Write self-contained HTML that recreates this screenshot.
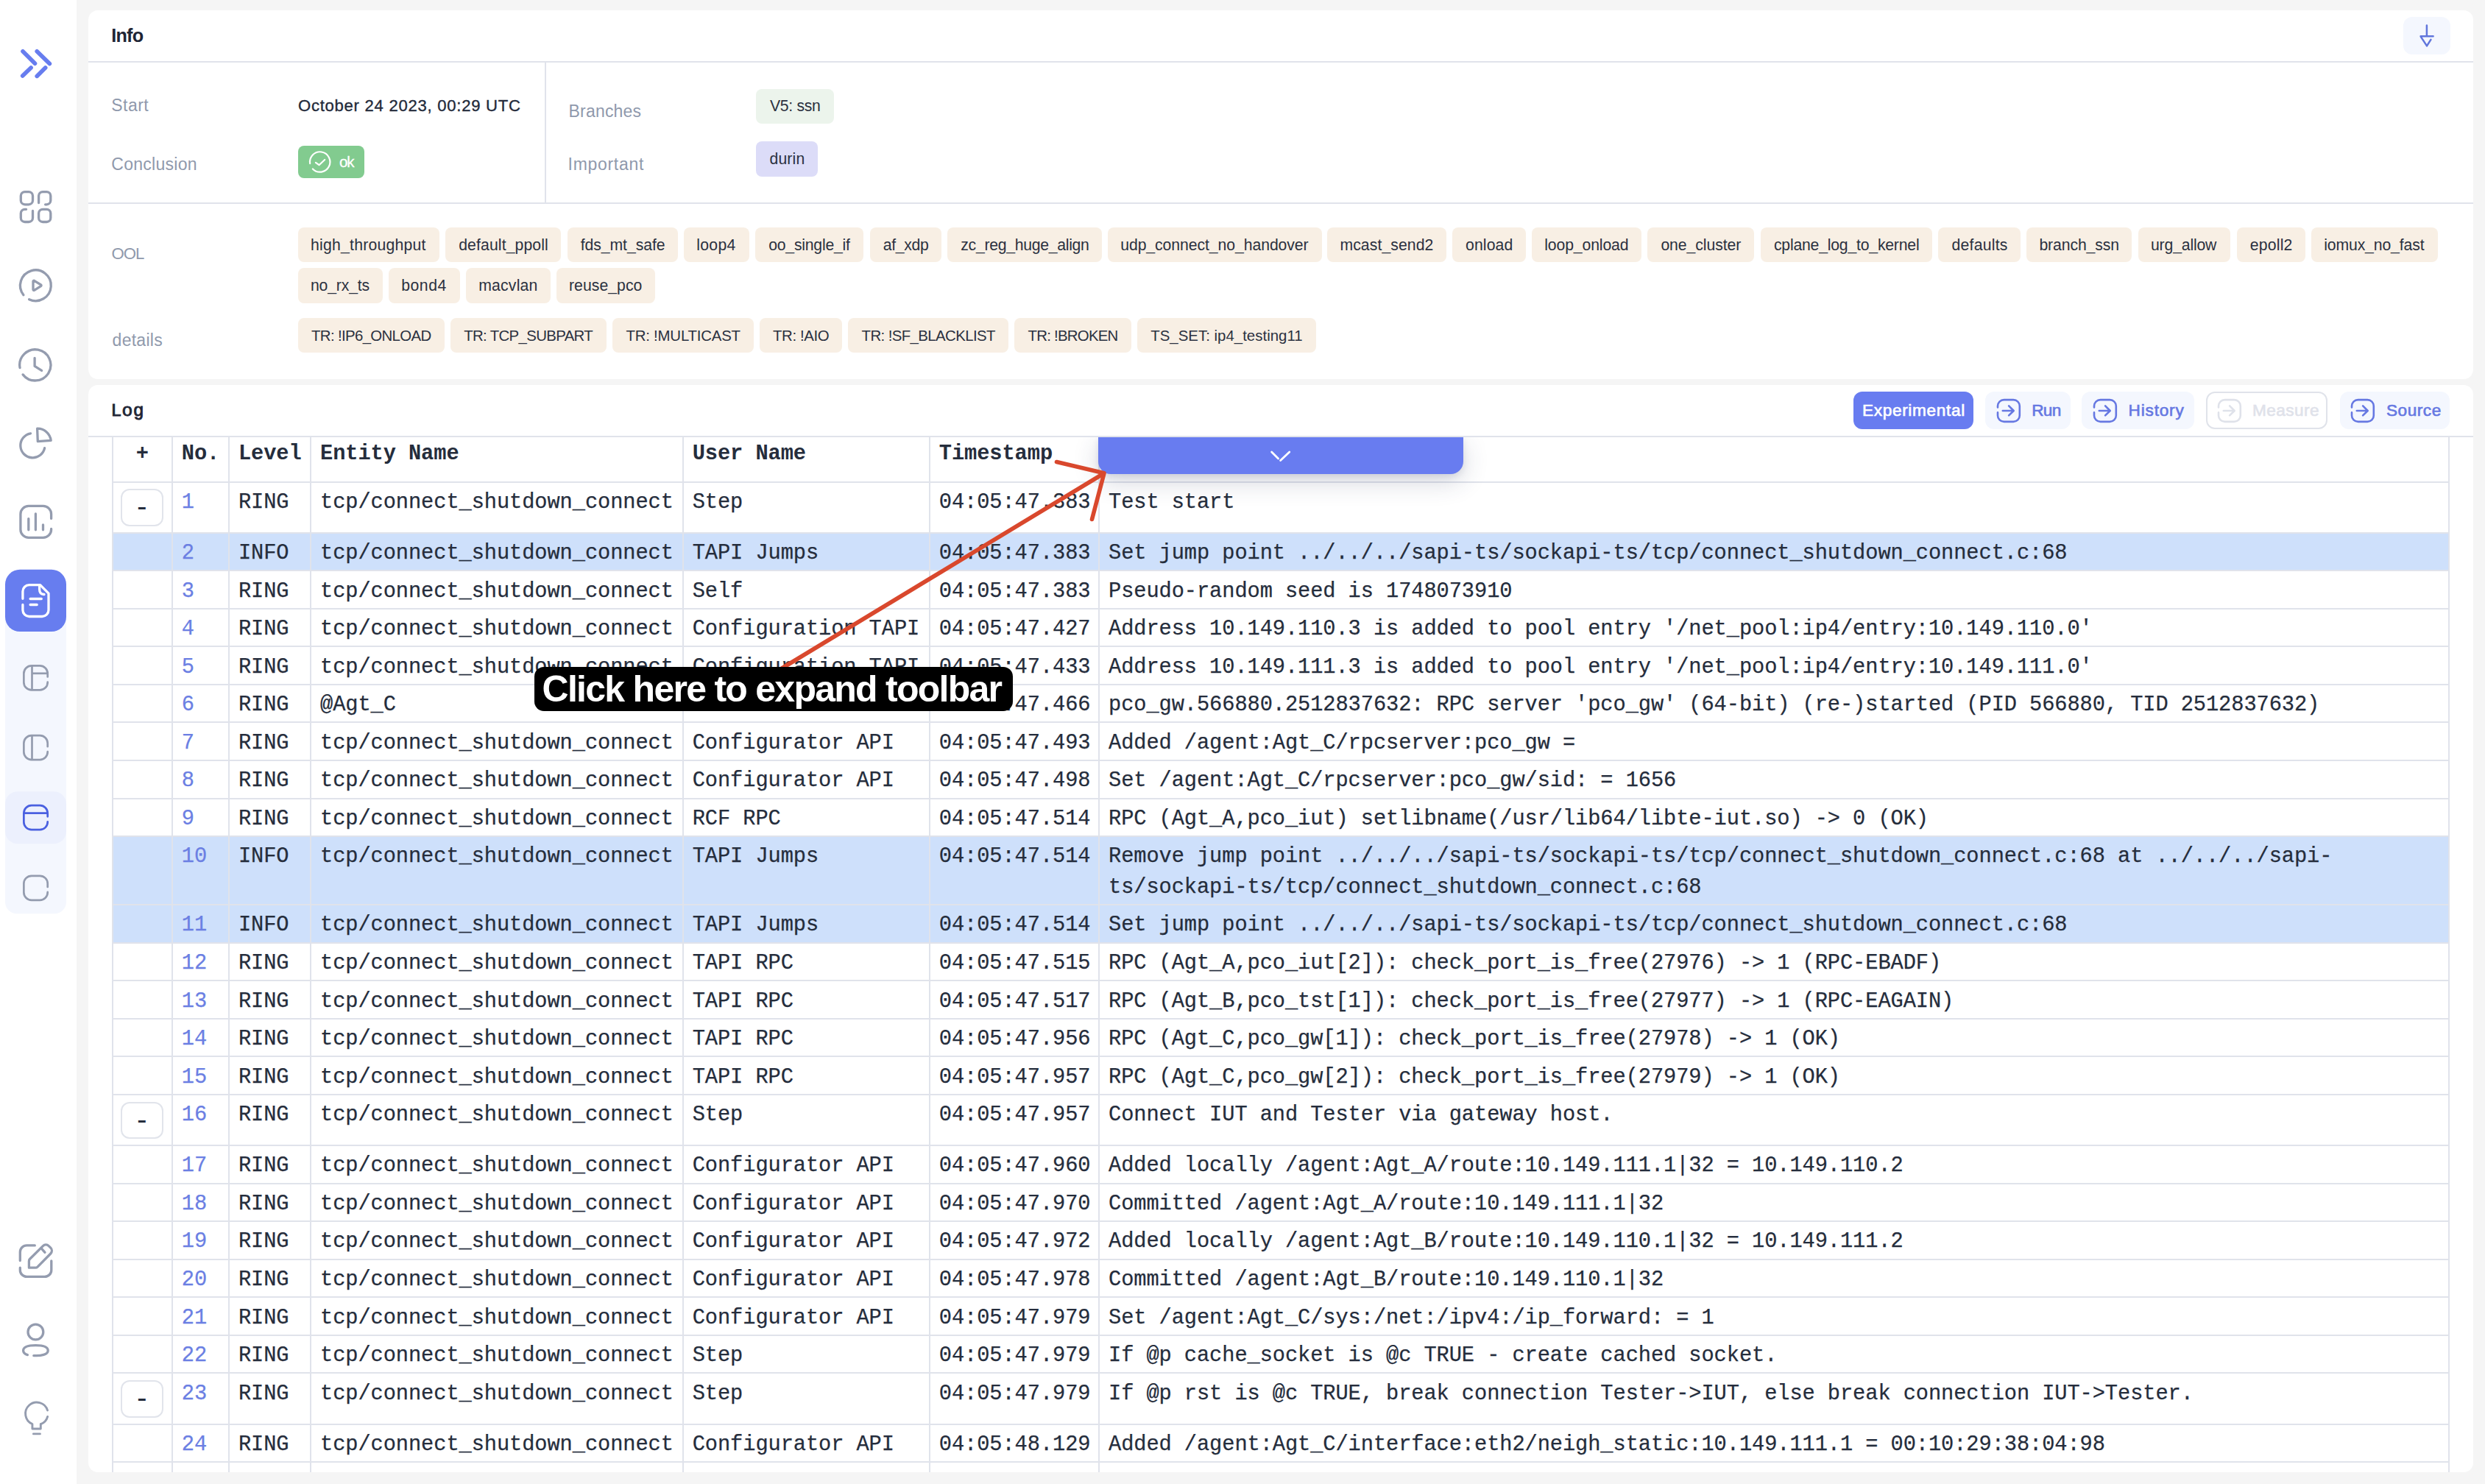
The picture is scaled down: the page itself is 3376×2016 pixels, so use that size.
<!DOCTYPE html>
<html lang="en"><head><meta charset="utf-8"><title>Log</title><style>
*{box-sizing:content-box}
html,body{margin:0;padding:0}
body{width:3376px;height:2016px;background:#f5f5f5;position:relative;overflow:hidden;font-family:'Liberation Sans', sans-serif}
.side{position:absolute;left:0;top:0;width:104px;height:2016px;background:#fff}
.sb{position:absolute;left:0;top:0}
.card{position:absolute;background:#fff;border-radius:13px}
.clip{position:absolute;overflow:hidden;border-radius:13px}
.ln{position:absolute;background:#e0e3eb}
.t{position:absolute;white-space:pre;line-height:1}
.chip{position:absolute;border-radius:8px}
.m{position:absolute;white-space:pre;font-family:'Liberation Mono', monospace;font-size:28.7px;line-height:41.4px;color:#252d3c;letter-spacing:-0.0778px;-webkit-text-stroke:0.25px}
.m.b{font-weight:700;-webkit-text-stroke:0}
.m.num{color:#6b7fe3}
.pm{position:absolute;width:53.4px;height:46.6px;border:2px solid #e1e4eb;border-radius:12px;background:#fff;font-family:'Liberation Mono', monospace;font-size:28.7px;color:#252d3c;}
.pm span{position:absolute;left:15.7px;top:7.0px;font-size:36px;line-height:1;letter-spacing:0}
</style></head><body>
<div class="side"><svg class="sb" width="104" height="2016" viewBox="0 0 104 2016" fill="none" stroke-linecap="round" stroke-linejoin="round">
<g stroke="#677def" stroke-width="5.6"><path d="M31 69.7L47.5 86.2M30.7 103L42.1 91.9M50.2 69.7L67.4 86.5M50.2 103.4L61.7 91.9"/></g>
<rect x="7" y="790" width="83" height="451.3" rx="16" fill="#f4f7fe"/>
<rect x="7" y="1075.3" width="83" height="71" rx="17" fill="#ecf0fd"/>
<rect x="7" y="773.8" width="83" height="84.2" rx="20" fill="#677def"/>
<g stroke="#949caf" stroke-width="3.3">
<rect x="28.3" y="260.6" width="16.2" height="17.2" rx="5.5"/>
<rect x="52.6" y="284.3" width="16.2" height="17.2" rx="5.5"/>
<path d="M52.6 275.6V266.1a5.5 5.5 0 0 1 5.5-5.5h5.2a5.5 5.5 0 0 1 5.5 5.5v6.2a5.5 5.5 0 0 1-5.5 5.5H61.6"/>
<path d="M35.6 284.3H33.8a5.5 5.5 0 0 0-5.5 5.5v6.2a5.5 5.5 0 0 0 5.5 5.5h5.2a5.5 5.5 0 0 0 5.5-5.5V286.4"/>
<path d="M31.93 400.67A20.9 20.9 0 1 1 39.57 406.74"/>
<path d="M45 382.2V393.4a1 1 0 0 0 1.5.9L55.6 388.6a1 1 0 0 0 0-1.7L46.5 381.3a1 1 0 0 0-1.5.9Z"/>
<path d="M27.02 499.56A21.1 21.1 0 1 1 31.17 508.89"/>
<path d="M47.1 486.3V497.4L56.6 503.3"/>
<path d="M41.52 588.85A16.6 16.6 0 1 0 60.64 608.65"/>
<path d="M50.6 582.2L51.3 599.6L69.2 598.4A18.3 18.3 0 0 0 50.6 582.2Z"/>
<path d="M69.6 704.4V698.4a11 11 0 0 0-11-11H38.9a11 11 0 0 0-11 11v21a11 11 0 0 0 11 11h19.7a11 11 0 0 0 11-11V718.5"/>
<path d="M38.8 704.6V719.8M48.4 698V719.8M58.5 712.8V719.8"/>
<path d="M47.3 1691.9H36.3a9 9 0 0 0-9 9V1712.6M27.3 1722.2V1725.4a9 9 0 0 0 9 9H60.8a9 9 0 0 0 9-9V1712.8"/>
<path d="M39.4 1722.2V1713.2a4 4 0 0 1 1.2-2.9L58.4 1692.6a5.6 5.6 0 0 1 7.8 0L68.8 1695.2a5.6 5.6 0 0 1 0 7.8L51.2 1720.8a4.6 4.6 0 0 1-3.2 1.4Z"/>
<path d="M56.6 1696.3L61 1701.3"/>
<circle cx="48.4" cy="1809.5" r="10.4"/>
<path d="M45.8 1841.6C56 1842.2 65.2 1840.2 65.2 1834.7C65.2 1829 56 1827.6 48.4 1827.6C40.8 1827.6 31.6 1829 31.6 1834.7C31.6 1837.6 34.2 1839.6 37.4 1840.6"/>
</g>
<g stroke="#949caf" stroke-width="2.9">
<path d="M64.53 1915.93A15.3 15.3 0 1 0 43.92 1934.48V1941H55.3V1934.6"/>
<path d="M55.38 1934.68A15.3 15.3 0 0 0 64.68 1924.36"/>
<path d="M45.4 1947.9H54.4"/>
</g>
<g stroke="#fff" stroke-width="3.3">
<path d="M30.9 813.3V803.5a8.8 8.8 0 0 1 8.8-8.8H54.6L66 806.1V828.7a8.8 8.8 0 0 1-8.8 8.8H39.7a8.8 8.8 0 0 1-8.8-8.8V821.5"/>
<path d="M53.6 795.3V800.6C53.6 805 56 807.5 60 807.5"/>
<path d="M41.1 813.5H56.3M41.1 821.5H50.2"/>
</g>
<g stroke="#949caf" stroke-width="2.7">
<path d="M64.7 919.5V914.9A10.5 10.5 0 0 0 54.2 904.4H42.85A10.5 10.5 0 0 0 32.35 914.9V926.9A10.5 10.5 0 0 0 42.85 937.4H54.2A10.5 10.5 0 0 0 64.7 926.9V926.5"/>
<path d="M43.5 904.4V937.4" stroke-linecap="butt"/>
<path d="M43.5 914.8H64.7" stroke-linecap="butt"/>
</g>
<g stroke="#949caf" stroke-width="2.7">
<path d="M64.7 1014.2V1009.6A10.5 10.5 0 0 0 54.2 999.1H42.85A10.5 10.5 0 0 0 32.35 1009.6V1021.5999999999999A10.5 10.5 0 0 0 42.85 1032.1H54.2A10.5 10.5 0 0 0 64.7 1021.5999999999999V1021.2"/>
<path d="M43.5 999.1V1032.1" stroke-linecap="butt"/>
</g>
<g stroke="#4a60e0" stroke-width="2.7">
<path d="M64.7 1109.3V1104.7A10.5 10.5 0 0 0 54.2 1094.2H42.85A10.5 10.5 0 0 0 32.35 1104.7V1116.7A10.5 10.5 0 0 0 42.85 1127.2H54.2A10.5 10.5 0 0 0 64.7 1116.7V1116.3"/>
<path d="M32.35 1104.6000000000001H64.7" stroke-linecap="butt"/>
</g>
<g stroke="#949caf" stroke-width="2.7">
<path d="M64.7 1204.9V1200.3A10.5 10.5 0 0 0 54.2 1189.8H42.85A10.5 10.5 0 0 0 32.35 1200.3V1212.3A10.5 10.5 0 0 0 42.85 1222.8H54.2A10.5 10.5 0 0 0 64.7 1212.3V1211.9"/>
</g>
</svg></div>
<div class="card" style="left:120px;top:14px;width:3240px;height:501px;">
</div>
<div class="ln" style="left:120px;top:83px;width:3240px;height:2px"></div>
<div class="ln" style="left:120px;top:275px;width:3240px;height:2px"></div>
<div class="ln" style="left:740px;top:85px;width:2px;height:190px"></div>
<div style="position:absolute;left:3265px;top:23px;width:63.5px;height:51px;border-radius:12px;background:#f4f7fe"></div>
<svg style="position:absolute;left:3265px;top:23px" width="64" height="51" viewBox="3265 23 64 51" fill="none" stroke="#6176dc" stroke-width="2.5" stroke-linecap="round" stroke-linejoin="round"><path d="M3296.9 34.6V49M3288.6 49.2H3305.6M3288.8 49.9L3297 62.4L3302.4 53.8"/></svg>
<div style="position:absolute;left:405px;top:198px;width:90px;height:44px;border-radius:8px;background:#82cb8f"></div>
<svg style="position:absolute;left:405px;top:198px" width="90" height="44" viewBox="405 198 90 44" fill="none" stroke="#fff" stroke-width="2.2" stroke-linecap="round" stroke-linejoin="round"><path d="M421.17 222.14A13.7 13.7 0 1 1 424.85 229.52"/><path d="M428.9 220.8L433.5 224.2L441.2 217"/></svg>
<div class="chip" style="left:1027px;top:121px;width:106.0px;height:47.0px;background:#ecf4ec"></div>
<div class="chip" style="left:1027px;top:192.2px;width:83.9px;height:47.6px;background:#dcdcf8"></div>
<div class="chip" style="left:404.8px;top:309px;width:192.0px;height:47.2px;background:#f8efe4"></div>
<div class="chip" style="left:605px;top:309px;width:157.3px;height:47.2px;background:#f8efe4"></div>
<div class="chip" style="left:770.5px;top:309px;width:150.5px;height:47.2px;background:#f8efe4"></div>
<div class="chip" style="left:929px;top:309px;width:88.7px;height:47.2px;background:#f8efe4"></div>
<div class="chip" style="left:1026px;top:309px;width:147.3px;height:47.2px;background:#f8efe4"></div>
<div class="chip" style="left:1181.5px;top:309px;width:97.7px;height:47.2px;background:#f8efe4"></div>
<div class="chip" style="left:1287.1px;top:309px;width:210.2px;height:47.2px;background:#f8efe4"></div>
<div class="chip" style="left:1505px;top:309px;width:290.8px;height:47.2px;background:#f8efe4"></div>
<div class="chip" style="left:1803.2px;top:309px;width:161.6px;height:47.2px;background:#f8efe4"></div>
<div class="chip" style="left:1972.8px;top:309px;width:99.9px;height:47.2px;background:#f8efe4"></div>
<div class="chip" style="left:2081px;top:309px;width:149.0px;height:47.2px;background:#f8efe4"></div>
<div class="chip" style="left:2238.2px;top:309px;width:145.3px;height:47.2px;background:#f8efe4"></div>
<div class="chip" style="left:2391.7px;top:309px;width:233.4px;height:47.2px;background:#f8efe4"></div>
<div class="chip" style="left:2633.3px;top:309px;width:111.7px;height:47.2px;background:#f8efe4"></div>
<div class="chip" style="left:2753.2px;top:309px;width:143.3px;height:47.2px;background:#f8efe4"></div>
<div class="chip" style="left:2904.8px;top:309px;width:125.5px;height:47.2px;background:#f8efe4"></div>
<div class="chip" style="left:3038.6px;top:309px;width:93.2px;height:47.2px;background:#f8efe4"></div>
<div class="chip" style="left:3140px;top:309px;width:171.9px;height:47.2px;background:#f8efe4"></div>
<div class="chip" style="left:404.8px;top:364.3px;width:114.9px;height:47.3px;background:#f8efe4"></div>
<div class="chip" style="left:528px;top:364.3px;width:96.7px;height:47.3px;background:#f8efe4"></div>
<div class="chip" style="left:633px;top:364.3px;width:114.8px;height:47.3px;background:#f8efe4"></div>
<div class="chip" style="left:755.8px;top:364.3px;width:134.0px;height:47.3px;background:#f8efe4"></div>
<div class="chip" style="left:404.8px;top:432.2px;width:198.9px;height:46.6px;background:#f8efe4"></div>
<div class="chip" style="left:612px;top:432.2px;width:211.9px;height:46.6px;background:#f8efe4"></div>
<div class="chip" style="left:832.2px;top:432.2px;width:191.6px;height:46.6px;background:#f8efe4"></div>
<div class="chip" style="left:1031.8px;top:432.2px;width:112.2px;height:46.6px;background:#f8efe4"></div>
<div class="chip" style="left:1152.4px;top:432.2px;width:217.8px;height:46.6px;background:#f8efe4"></div>
<div class="chip" style="left:1378.4px;top:432.2px;width:158.4px;height:46.6px;background:#f8efe4"></div>
<div class="chip" style="left:1545px;top:432.2px;width:242.5px;height:46.6px;background:#f8efe4"></div>
<div class="card" style="left:120px;top:523px;width:3240px;height:1477px;"></div>
<div class="clip" style="left:120px;top:523px;width:3240px;height:1477px;">
<div class="ln" style="left:0.00px;top:69.00px;width:3240.00px;height:2.00px;"></div>
<div style="position:absolute;left:32.70px;top:201.60px;width:3174.60px;height:49.56px;background:#cee0fb"></div>
<div style="position:absolute;left:32.70px;top:614.12px;width:3174.60px;height:90.97px;background:#cee0fb"></div>
<div style="position:absolute;left:32.70px;top:707.09px;width:3174.60px;height:49.56px;background:#cee0fb"></div>
<div class="ln" style="left:31.70px;top:130.50px;width:3176.60px;height:2.00px;"></div>
<div class="ln" style="left:31.70px;top:199.60px;width:3176.60px;height:2.00px;"></div>
<div class="ln" style="left:31.70px;top:251.16px;width:3176.60px;height:2.00px;"></div>
<div class="ln" style="left:31.70px;top:302.73px;width:3176.60px;height:2.00px;"></div>
<div class="ln" style="left:31.70px;top:354.30px;width:3176.60px;height:2.00px;"></div>
<div class="ln" style="left:31.70px;top:405.86px;width:3176.60px;height:2.00px;"></div>
<div class="ln" style="left:31.70px;top:457.43px;width:3176.60px;height:2.00px;"></div>
<div class="ln" style="left:31.70px;top:508.99px;width:3176.60px;height:2.00px;"></div>
<div class="ln" style="left:31.70px;top:560.56px;width:3176.60px;height:2.00px;"></div>
<div class="ln" style="left:31.70px;top:612.12px;width:3176.60px;height:2.00px;"></div>
<div class="ln" style="left:31.70px;top:705.09px;width:3176.60px;height:2.00px;"></div>
<div class="ln" style="left:31.70px;top:756.65px;width:3176.60px;height:2.00px;"></div>
<div class="ln" style="left:31.70px;top:808.22px;width:3176.60px;height:2.00px;"></div>
<div class="ln" style="left:31.70px;top:859.78px;width:3176.60px;height:2.00px;"></div>
<div class="ln" style="left:31.70px;top:911.35px;width:3176.60px;height:2.00px;"></div>
<div class="ln" style="left:31.70px;top:962.91px;width:3176.60px;height:2.00px;"></div>
<div class="ln" style="left:31.70px;top:1032.01px;width:3176.60px;height:2.00px;"></div>
<div class="ln" style="left:31.70px;top:1083.58px;width:3176.60px;height:2.00px;"></div>
<div class="ln" style="left:31.70px;top:1135.14px;width:3176.60px;height:2.00px;"></div>
<div class="ln" style="left:31.70px;top:1186.71px;width:3176.60px;height:2.00px;"></div>
<div class="ln" style="left:31.70px;top:1238.27px;width:3176.60px;height:2.00px;"></div>
<div class="ln" style="left:31.70px;top:1289.84px;width:3176.60px;height:2.00px;"></div>
<div class="ln" style="left:31.70px;top:1341.40px;width:3176.60px;height:2.00px;"></div>
<div class="ln" style="left:31.70px;top:1410.50px;width:3176.60px;height:2.00px;"></div>
<div class="ln" style="left:31.70px;top:1462.07px;width:3176.60px;height:2.00px;"></div>
<div class="ln" style="left:31.70px;top:70.00px;width:2.00px;height:1500.00px;"></div>
<div class="ln" style="left:112.80px;top:70.00px;width:2.00px;height:1500.00px;"></div>
<div class="ln" style="left:189.90px;top:70.00px;width:2.00px;height:1500.00px;"></div>
<div class="ln" style="left:301.00px;top:70.00px;width:2.00px;height:1500.00px;"></div>
<div class="ln" style="left:806.70px;top:70.00px;width:2.00px;height:1500.00px;"></div>
<div class="ln" style="left:1141.80px;top:70.00px;width:2.00px;height:1500.00px;"></div>
<div class="ln" style="left:1372.00px;top:70.00px;width:2.00px;height:1500.00px;"></div>
<div class="ln" style="left:3206.30px;top:70.00px;width:2.00px;height:1500.00px;"></div>
<div class="m b" style="left:32.70px;width:81.10px;text-align:center;top:72.65px">+</div>
<div class="m b" style="left:126.80px;top:72.65px">No.</div>
<div class="m b" style="left:203.90px;top:72.65px">Level</div>
<div class="m b" style="left:315.00px;top:72.65px">Entity Name</div>
<div class="m b" style="left:820.70px;top:72.65px">User Name</div>
<div class="m b" style="left:1155.80px;top:72.65px">Timestamp</div>
<div class="pm" style="left:44.30000000000001px;top:141.10px"><span>-</span></div>
<div class="m num" style="left:126.80px;top:138.85px">1</div>
<div class="m" style="left:203.90px;top:138.85px">RING</div>
<div class="m" style="left:315.00px;top:138.85px">tcp/connect_shutdown_connect</div>
<div class="m" style="left:820.70px;top:138.85px">Step</div>
<div class="m" style="left:1155.80px;top:138.85px">04:05:47.383</div>
<div class="m" style="left:1386.00px;top:138.85px">Test start</div>
<div class="m num" style="left:126.80px;top:207.95px">2</div>
<div class="m" style="left:203.90px;top:207.95px">INFO</div>
<div class="m" style="left:315.00px;top:207.95px">tcp/connect_shutdown_connect</div>
<div class="m" style="left:820.70px;top:207.95px">TAPI Jumps</div>
<div class="m" style="left:1155.80px;top:207.95px">04:05:47.383</div>
<div class="m" style="left:1386.00px;top:207.95px">Set jump point ../../../sapi-ts/sockapi-ts/tcp/connect_shutdown_connect.c:68</div>
<div class="m num" style="left:126.80px;top:259.51px">3</div>
<div class="m" style="left:203.90px;top:259.51px">RING</div>
<div class="m" style="left:315.00px;top:259.51px">tcp/connect_shutdown_connect</div>
<div class="m" style="left:820.70px;top:259.51px">Self</div>
<div class="m" style="left:1155.80px;top:259.51px">04:05:47.383</div>
<div class="m" style="left:1386.00px;top:259.51px">Pseudo-random seed is 1748073910</div>
<div class="m num" style="left:126.80px;top:311.08px">4</div>
<div class="m" style="left:203.90px;top:311.08px">RING</div>
<div class="m" style="left:315.00px;top:311.08px">tcp/connect_shutdown_connect</div>
<div class="m" style="left:820.70px;top:311.08px">Configuration TAPI</div>
<div class="m" style="left:1155.80px;top:311.08px">04:05:47.427</div>
<div class="m" style="left:1386.00px;top:311.08px">Address 10.149.110.3 is added to pool entry &#x27;/net_pool:ip4/entry:10.149.110.0&#x27;</div>
<div class="m num" style="left:126.80px;top:362.64px">5</div>
<div class="m" style="left:203.90px;top:362.64px">RING</div>
<div class="m" style="left:315.00px;top:362.64px">tcp/connect_shutdown_connect</div>
<div class="m" style="left:820.70px;top:362.64px">Configuration TAPI</div>
<div class="m" style="left:1155.80px;top:362.64px">04:05:47.433</div>
<div class="m" style="left:1386.00px;top:362.64px">Address 10.149.111.3 is added to pool entry &#x27;/net_pool:ip4/entry:10.149.111.0&#x27;</div>
<div class="m num" style="left:126.80px;top:414.21px">6</div>
<div class="m" style="left:203.90px;top:414.21px">RING</div>
<div class="m" style="left:315.00px;top:414.21px">@Agt_C</div>
<div class="m" style="left:820.70px;top:414.21px">Self</div>
<div class="m" style="left:1155.80px;top:414.21px">04:05:47.466</div>
<div class="m" style="left:1386.00px;top:414.21px">pco_gw.566880.2512837632: RPC server &#x27;pco_gw&#x27; (64-bit) (re-)started (PID 566880, TID 2512837632)</div>
<div class="m num" style="left:126.80px;top:465.77px">7</div>
<div class="m" style="left:203.90px;top:465.77px">RING</div>
<div class="m" style="left:315.00px;top:465.77px">tcp/connect_shutdown_connect</div>
<div class="m" style="left:820.70px;top:465.77px">Configurator API</div>
<div class="m" style="left:1155.80px;top:465.77px">04:05:47.493</div>
<div class="m" style="left:1386.00px;top:465.77px">Added /agent:Agt_C/rpcserver:pco_gw =</div>
<div class="m num" style="left:126.80px;top:517.34px">8</div>
<div class="m" style="left:203.90px;top:517.34px">RING</div>
<div class="m" style="left:315.00px;top:517.34px">tcp/connect_shutdown_connect</div>
<div class="m" style="left:820.70px;top:517.34px">Configurator API</div>
<div class="m" style="left:1155.80px;top:517.34px">04:05:47.498</div>
<div class="m" style="left:1386.00px;top:517.34px">Set /agent:Agt_C/rpcserver:pco_gw/sid: = 1656</div>
<div class="m num" style="left:126.80px;top:568.90px">9</div>
<div class="m" style="left:203.90px;top:568.90px">RING</div>
<div class="m" style="left:315.00px;top:568.90px">tcp/connect_shutdown_connect</div>
<div class="m" style="left:820.70px;top:568.90px">RCF RPC</div>
<div class="m" style="left:1155.80px;top:568.90px">04:05:47.514</div>
<div class="m" style="left:1386.00px;top:568.90px">RPC (Agt_A,pco_iut) setlibname(/usr/lib64/libte-iut.so) -&gt; 0 (OK)</div>
<div class="m num" style="left:126.80px;top:620.47px">10</div>
<div class="m" style="left:203.90px;top:620.47px">INFO</div>
<div class="m" style="left:315.00px;top:620.47px">tcp/connect_shutdown_connect</div>
<div class="m" style="left:820.70px;top:620.47px">TAPI Jumps</div>
<div class="m" style="left:1155.80px;top:620.47px">04:05:47.514</div>
<div class="m" style="left:1386.00px;top:620.47px">Remove jump point ../../../sapi-ts/sockapi-ts/tcp/connect_shutdown_connect.c:68 at ../../../sapi-<br>ts/sockapi-ts/tcp/connect_shutdown_connect.c:68</div>
<div class="m num" style="left:126.80px;top:713.43px">11</div>
<div class="m" style="left:203.90px;top:713.43px">INFO</div>
<div class="m" style="left:315.00px;top:713.43px">tcp/connect_shutdown_connect</div>
<div class="m" style="left:820.70px;top:713.43px">TAPI Jumps</div>
<div class="m" style="left:1155.80px;top:713.43px">04:05:47.514</div>
<div class="m" style="left:1386.00px;top:713.43px">Set jump point ../../../sapi-ts/sockapi-ts/tcp/connect_shutdown_connect.c:68</div>
<div class="m num" style="left:126.80px;top:765.00px">12</div>
<div class="m" style="left:203.90px;top:765.00px">RING</div>
<div class="m" style="left:315.00px;top:765.00px">tcp/connect_shutdown_connect</div>
<div class="m" style="left:820.70px;top:765.00px">TAPI RPC</div>
<div class="m" style="left:1155.80px;top:765.00px">04:05:47.515</div>
<div class="m" style="left:1386.00px;top:765.00px">RPC (Agt_A,pco_iut[2]): check_port_is_free(27976) -&gt; 1 (RPC-EBADF)</div>
<div class="m num" style="left:126.80px;top:816.56px">13</div>
<div class="m" style="left:203.90px;top:816.56px">RING</div>
<div class="m" style="left:315.00px;top:816.56px">tcp/connect_shutdown_connect</div>
<div class="m" style="left:820.70px;top:816.56px">TAPI RPC</div>
<div class="m" style="left:1155.80px;top:816.56px">04:05:47.517</div>
<div class="m" style="left:1386.00px;top:816.56px">RPC (Agt_B,pco_tst[1]): check_port_is_free(27977) -&gt; 1 (RPC-EAGAIN)</div>
<div class="m num" style="left:126.80px;top:868.13px">14</div>
<div class="m" style="left:203.90px;top:868.13px">RING</div>
<div class="m" style="left:315.00px;top:868.13px">tcp/connect_shutdown_connect</div>
<div class="m" style="left:820.70px;top:868.13px">TAPI RPC</div>
<div class="m" style="left:1155.80px;top:868.13px">04:05:47.956</div>
<div class="m" style="left:1386.00px;top:868.13px">RPC (Agt_C,pco_gw[1]): check_port_is_free(27978) -&gt; 1 (OK)</div>
<div class="m num" style="left:126.80px;top:919.69px">15</div>
<div class="m" style="left:203.90px;top:919.69px">RING</div>
<div class="m" style="left:315.00px;top:919.69px">tcp/connect_shutdown_connect</div>
<div class="m" style="left:820.70px;top:919.69px">TAPI RPC</div>
<div class="m" style="left:1155.80px;top:919.69px">04:05:47.957</div>
<div class="m" style="left:1386.00px;top:919.69px">RPC (Agt_C,pco_gw[2]): check_port_is_free(27979) -&gt; 1 (OK)</div>
<div class="pm" style="left:44.30000000000001px;top:973.51px"><span>-</span></div>
<div class="m num" style="left:126.80px;top:971.26px">16</div>
<div class="m" style="left:203.90px;top:971.26px">RING</div>
<div class="m" style="left:315.00px;top:971.26px">tcp/connect_shutdown_connect</div>
<div class="m" style="left:820.70px;top:971.26px">Step</div>
<div class="m" style="left:1155.80px;top:971.26px">04:05:47.957</div>
<div class="m" style="left:1386.00px;top:971.26px">Connect IUT and Tester via gateway host.</div>
<div class="m num" style="left:126.80px;top:1040.36px">17</div>
<div class="m" style="left:203.90px;top:1040.36px">RING</div>
<div class="m" style="left:315.00px;top:1040.36px">tcp/connect_shutdown_connect</div>
<div class="m" style="left:820.70px;top:1040.36px">Configurator API</div>
<div class="m" style="left:1155.80px;top:1040.36px">04:05:47.960</div>
<div class="m" style="left:1386.00px;top:1040.36px">Added locally /agent:Agt_A/route:10.149.111.1|32 = 10.149.110.2</div>
<div class="m num" style="left:126.80px;top:1091.92px">18</div>
<div class="m" style="left:203.90px;top:1091.92px">RING</div>
<div class="m" style="left:315.00px;top:1091.92px">tcp/connect_shutdown_connect</div>
<div class="m" style="left:820.70px;top:1091.92px">Configurator API</div>
<div class="m" style="left:1155.80px;top:1091.92px">04:05:47.970</div>
<div class="m" style="left:1386.00px;top:1091.92px">Committed /agent:Agt_A/route:10.149.111.1|32</div>
<div class="m num" style="left:126.80px;top:1143.49px">19</div>
<div class="m" style="left:203.90px;top:1143.49px">RING</div>
<div class="m" style="left:315.00px;top:1143.49px">tcp/connect_shutdown_connect</div>
<div class="m" style="left:820.70px;top:1143.49px">Configurator API</div>
<div class="m" style="left:1155.80px;top:1143.49px">04:05:47.972</div>
<div class="m" style="left:1386.00px;top:1143.49px">Added locally /agent:Agt_B/route:10.149.110.1|32 = 10.149.111.2</div>
<div class="m num" style="left:126.80px;top:1195.05px">20</div>
<div class="m" style="left:203.90px;top:1195.05px">RING</div>
<div class="m" style="left:315.00px;top:1195.05px">tcp/connect_shutdown_connect</div>
<div class="m" style="left:820.70px;top:1195.05px">Configurator API</div>
<div class="m" style="left:1155.80px;top:1195.05px">04:05:47.978</div>
<div class="m" style="left:1386.00px;top:1195.05px">Committed /agent:Agt_B/route:10.149.110.1|32</div>
<div class="m num" style="left:126.80px;top:1246.62px">21</div>
<div class="m" style="left:203.90px;top:1246.62px">RING</div>
<div class="m" style="left:315.00px;top:1246.62px">tcp/connect_shutdown_connect</div>
<div class="m" style="left:820.70px;top:1246.62px">Configurator API</div>
<div class="m" style="left:1155.80px;top:1246.62px">04:05:47.979</div>
<div class="m" style="left:1386.00px;top:1246.62px">Set /agent:Agt_C/sys:/net:/ipv4:/ip_forward: = 1</div>
<div class="m num" style="left:126.80px;top:1298.18px">22</div>
<div class="m" style="left:203.90px;top:1298.18px">RING</div>
<div class="m" style="left:315.00px;top:1298.18px">tcp/connect_shutdown_connect</div>
<div class="m" style="left:820.70px;top:1298.18px">Step</div>
<div class="m" style="left:1155.80px;top:1298.18px">04:05:47.979</div>
<div class="m" style="left:1386.00px;top:1298.18px">If @p cache_socket is @c TRUE - create cached socket.</div>
<div class="pm" style="left:44.30000000000001px;top:1352.00px"><span>-</span></div>
<div class="m num" style="left:126.80px;top:1349.75px">23</div>
<div class="m" style="left:203.90px;top:1349.75px">RING</div>
<div class="m" style="left:315.00px;top:1349.75px">tcp/connect_shutdown_connect</div>
<div class="m" style="left:820.70px;top:1349.75px">Step</div>
<div class="m" style="left:1155.80px;top:1349.75px">04:05:47.979</div>
<div class="m" style="left:1386.00px;top:1349.75px">If @p rst is @c TRUE, break connection Tester-&gt;IUT, else break connection IUT-&gt;Tester.</div>
<div class="m num" style="left:126.80px;top:1418.85px">24</div>
<div class="m" style="left:203.90px;top:1418.85px">RING</div>
<div class="m" style="left:315.00px;top:1418.85px">tcp/connect_shutdown_connect</div>
<div class="m" style="left:820.70px;top:1418.85px">Configurator API</div>
<div class="m" style="left:1155.80px;top:1418.85px">04:05:48.129</div>
<div class="m" style="left:1386.00px;top:1418.85px">Added /agent:Agt_C/interface:eth2/neigh_static:10.149.111.1 = 00:10:29:38:04:98</div>
<div class="m num" style="left:126.80px;top:1472.41px">25</div>
<div class="m" style="left:203.90px;top:1472.41px">RING</div>
<div class="m" style="left:315.00px;top:1472.41px">tcp/connect_shutdown_connect</div>
<div class="m" style="left:820.70px;top:1472.41px">Configurator API</div>
<div class="m" style="left:1155.80px;top:1472.41px">04:05:48.129</div>
<div class="m" style="left:1386.00px;top:1472.41px">Added /agent:Agt_C/interface:eth2/neigh_static:10.149.111.1 = 00:10:29:38:04:98</div>
</div>
<div style="position:absolute;left:1392.4px;top:594px;width:700px;height:220px;overflow:hidden"><div style="position:absolute;left:100px;top:0;width:495.5px;height:49.8px;border-radius:0 0 17px 17px;background:#687cf0;box-shadow:0 10px 34px rgba(40,50,90,0.20),0 3px 8px rgba(40,50,90,0.10)"></div></div>
<svg style="position:absolute;left:1720px;top:604px" width="40" height="30" viewBox="1720 604 40 30" fill="none" stroke="#fff" stroke-width="2.8" stroke-linecap="round"><path d="M1727.6 613.9L1736.6 622.9M1739.6 625.6L1751.8 613.9"/></svg>
<div style="position:absolute;left:2518.2px;top:532.2px;width:162.8px;height:50.6px;border-radius:12px;background:#687cf0"></div>
<div style="position:absolute;left:2697px;top:532.2px;width:115.5px;height:50.6px;border-radius:12px;background:#f4f7fe"></div>
<svg style="position:absolute;left:2709.50px;top:537.50px" width="40" height="40" viewBox="2709.50 537.50 40 40" fill="none" stroke="#6678e2" stroke-width="2.6" stroke-linecap="round" stroke-linejoin="round"><path d="M2713.50 552.90V551.10a8.5 8.5 0 0 1 8.5-8.5h12.8a8.5 8.5 0 0 1 8.5 8.5v12.8a8.5 8.5 0 0 1-8.5 8.5h-12.8a8.5 8.5 0 0 1-8.5-8.5V559.90"/><path d="M2720.30 557.5H2735.00M2728.60 550.90L2735.20 557.5L2728.60 563.90"/></svg>
<div style="position:absolute;left:2828.4px;top:532.2px;width:152.6px;height:50.6px;border-radius:12px;background:#f4f7fe"></div>
<svg style="position:absolute;left:2840.90px;top:537.50px" width="40" height="40" viewBox="2840.90 537.50 40 40" fill="none" stroke="#6678e2" stroke-width="2.6" stroke-linecap="round" stroke-linejoin="round"><path d="M2844.90 552.90V551.10a8.5 8.5 0 0 1 8.5-8.5h12.8a8.5 8.5 0 0 1 8.5 8.5v12.8a8.5 8.5 0 0 1-8.5 8.5h-12.8a8.5 8.5 0 0 1-8.5-8.5V559.90"/><path d="M2851.70 557.5H2866.40M2860.00 550.90L2866.60 557.5L2860.00 563.90"/></svg>
<div style="position:absolute;left:2997.1px;top:532.2px;width:165.3px;height:50.6px;border-radius:12px;border:2px solid #e0e3ea;box-sizing:border-box;background:#fff"></div>
<svg style="position:absolute;left:3009.60px;top:537.50px" width="40" height="40" viewBox="3009.60 537.50 40 40" fill="none" stroke="#dfe2ea" stroke-width="2.6" stroke-linecap="round" stroke-linejoin="round"><path d="M3013.60 552.90V551.10a8.5 8.5 0 0 1 8.5-8.5h12.8a8.5 8.5 0 0 1 8.5 8.5v12.8a8.5 8.5 0 0 1-8.5 8.5h-12.8a8.5 8.5 0 0 1-8.5-8.5V559.90"/><path d="M3020.40 557.5H3035.10M3028.70 550.90L3035.30 557.5L3028.70 563.90"/></svg>
<div style="position:absolute;left:3178.9px;top:532.2px;width:149.2px;height:50.6px;border-radius:12px;background:#f4f7fe"></div>
<svg style="position:absolute;left:3191.40px;top:537.50px" width="40" height="40" viewBox="3191.40 537.50 40 40" fill="none" stroke="#6678e2" stroke-width="2.6" stroke-linecap="round" stroke-linejoin="round"><path d="M3195.40 552.90V551.10a8.5 8.5 0 0 1 8.5-8.5h12.8a8.5 8.5 0 0 1 8.5 8.5v12.8a8.5 8.5 0 0 1-8.5 8.5h-12.8a8.5 8.5 0 0 1-8.5-8.5V559.90"/><path d="M3202.20 557.5H3216.90M3210.50 550.90L3217.10 557.5L3210.50 563.90"/></svg>
<svg style="position:absolute;left:1040px;top:600px" width="500" height="340" viewBox="1040 600 500 340" fill="none" stroke="#d9482d" stroke-width="5.6" stroke-linecap="round" stroke-linejoin="round"><path d="M1062 908L1499 643.5"/><path d="M1435.5 627.5L1500 642.8L1483.5 705.5"/></svg>
<div style="position:absolute;left:725.8px;top:906px;width:650.2px;height:60.2px;border-radius:13px;background:#000"></div>
<div class="t " style="left:151.30px;top:35.57px;font-size:25.2px;font-weight:700;color:#1e2535;font-family:'Liberation Sans', sans-serif;letter-spacing:-0.790px;">Info</div>
<div class="t " style="left:151.30px;top:132.33px;font-size:23px;font-weight:400;color:#8f99ac;font-family:'Liberation Sans', sans-serif;letter-spacing:0.455px;">Start</div>
<div class="t " style="left:151.30px;top:211.53px;font-size:23px;font-weight:400;color:#8f99ac;font-family:'Liberation Sans', sans-serif;letter-spacing:0.267px;">Conclusion</div>
<div class="t " style="left:772.60px;top:139.83px;font-size:23px;font-weight:400;color:#8f99ac;font-family:'Liberation Sans', sans-serif;letter-spacing:0.176px;">Branches</div>
<div class="t " style="left:771.60px;top:211.53px;font-size:23px;font-weight:400;color:#8f99ac;font-family:'Liberation Sans', sans-serif;letter-spacing:0.692px;">Important</div>
<div class="t " style="left:151.60px;top:333.71px;font-size:22.2px;font-weight:400;color:#8f99ac;font-family:'Liberation Sans', sans-serif;letter-spacing:-1.058px;">OOL</div>
<div class="t " style="left:152.60px;top:451.33px;font-size:23px;font-weight:400;color:#8f99ac;font-family:'Liberation Sans', sans-serif;letter-spacing:0.269px;">details</div>
<div class="t " style="left:405.00px;top:133.19px;font-size:22.1px;font-weight:400;color:#232a3a;font-family:'Liberation Sans', sans-serif;letter-spacing:0.730px;-webkit-text-stroke:0.35px #232a3a;">October 24 2023, 00:29 UTC</div>
<div class="t " style="left:461.00px;top:209.85px;font-size:20.5px;font-weight:400;color:#fff;font-family:'Liberation Sans', sans-serif;letter-spacing:-1.201px;-webkit-text-stroke:0.3px #fff;">ok</div>
<div class="t " style="left:1045.90px;top:133.35px;font-size:21.2px;font-weight:400;color:#2b3140;font-family:'Liberation Sans', sans-serif;letter-spacing:-0.279px;">V5: ssn</div>
<div class="t " style="left:1045.45px;top:204.75px;font-size:21.2px;font-weight:400;color:#2b3140;font-family:'Liberation Sans', sans-serif;letter-spacing:0.168px;">durin</div>
<div class="t " style="left:422.00px;top:322.05px;font-size:21.2px;font-weight:400;color:#2b3140;font-family:'Liberation Sans', sans-serif;letter-spacing:0.238px;">high_throughput</div>
<div class="t " style="left:623.20px;top:322.05px;font-size:21.2px;font-weight:400;color:#2b3140;font-family:'Liberation Sans', sans-serif;letter-spacing:0.120px;">default_ppoll</div>
<div class="t " style="left:788.70px;top:322.05px;font-size:21.2px;font-weight:400;color:#2b3140;font-family:'Liberation Sans', sans-serif;letter-spacing:-0.053px;">fds_mt_safe</div>
<div class="t " style="left:946.20px;top:322.05px;font-size:21.2px;font-weight:400;color:#2b3140;font-family:'Liberation Sans', sans-serif;letter-spacing:0.311px;">loop4</div>
<div class="t " style="left:1044.20px;top:322.05px;font-size:21.2px;font-weight:400;color:#2b3140;font-family:'Liberation Sans', sans-serif;letter-spacing:-0.209px;">oo_single_if</div>
<div class="t " style="left:1199.70px;top:322.05px;font-size:21.2px;font-weight:400;color:#2b3140;font-family:'Liberation Sans', sans-serif;letter-spacing:-0.306px;">af_xdp</div>
<div class="t " style="left:1305.30px;top:322.05px;font-size:21.2px;font-weight:400;color:#2b3140;font-family:'Liberation Sans', sans-serif;letter-spacing:-0.280px;">zc_reg_huge_align</div>
<div class="t " style="left:1522.20px;top:322.05px;font-size:21.2px;font-weight:400;color:#2b3140;font-family:'Liberation Sans', sans-serif;letter-spacing:-0.062px;">udp_connect_no_handover</div>
<div class="t " style="left:1820.40px;top:322.05px;font-size:21.2px;font-weight:400;color:#2b3140;font-family:'Liberation Sans', sans-serif;letter-spacing:0.097px;">mcast_send2</div>
<div class="t " style="left:1991.00px;top:322.05px;font-size:21.2px;font-weight:400;color:#2b3140;font-family:'Liberation Sans', sans-serif;letter-spacing:0.132px;">onload</div>
<div class="t " style="left:2098.20px;top:322.05px;font-size:21.2px;font-weight:400;color:#2b3140;font-family:'Liberation Sans', sans-serif;letter-spacing:-0.108px;">loop_onload</div>
<div class="t " style="left:2256.40px;top:322.05px;font-size:21.2px;font-weight:400;color:#2b3140;font-family:'Liberation Sans', sans-serif;letter-spacing:-0.058px;">one_cluster</div>
<div class="t " style="left:2409.90px;top:322.05px;font-size:21.2px;font-weight:400;color:#2b3140;font-family:'Liberation Sans', sans-serif;letter-spacing:-0.196px;">cplane_log_to_kernel</div>
<div class="t " style="left:2651.50px;top:322.05px;font-size:21.2px;font-weight:400;color:#2b3140;font-family:'Liberation Sans', sans-serif;letter-spacing:0.241px;">defaults</div>
<div class="t " style="left:2770.40px;top:322.05px;font-size:21.2px;font-weight:400;color:#2b3140;font-family:'Liberation Sans', sans-serif;letter-spacing:-0.095px;">branch_ssn</div>
<div class="t " style="left:2922.00px;top:322.05px;font-size:21.2px;font-weight:400;color:#2b3140;font-family:'Liberation Sans', sans-serif;letter-spacing:-0.161px;">urg_allow</div>
<div class="t " style="left:3056.80px;top:322.05px;font-size:21.2px;font-weight:400;color:#2b3140;font-family:'Liberation Sans', sans-serif;letter-spacing:0.207px;">epoll2</div>
<div class="t " style="left:3157.20px;top:322.05px;font-size:21.2px;font-weight:400;color:#2b3140;font-family:'Liberation Sans', sans-serif;letter-spacing:-0.118px;">iomux_no_fast</div>
<div class="t " style="left:422.00px;top:377.40px;font-size:21.2px;font-weight:400;color:#2b3140;font-family:'Liberation Sans', sans-serif;letter-spacing:-0.167px;">no_rx_ts</div>
<div class="t " style="left:545.20px;top:377.40px;font-size:21.2px;font-weight:400;color:#2b3140;font-family:'Liberation Sans', sans-serif;letter-spacing:0.542px;">bond4</div>
<div class="t " style="left:650.20px;top:377.40px;font-size:21.2px;font-weight:400;color:#2b3140;font-family:'Liberation Sans', sans-serif;letter-spacing:0.215px;">macvlan</div>
<div class="t " style="left:773.00px;top:377.40px;font-size:21.2px;font-weight:400;color:#2b3140;font-family:'Liberation Sans', sans-serif;letter-spacing:0.055px;">reuse_pco</div>
<div class="t " style="left:423.00px;top:445.63px;font-size:20.4px;font-weight:400;color:#2b3140;font-family:'Liberation Sans', sans-serif;letter-spacing:-0.644px;">TR: !IP6_ONLOAD</div>
<div class="t " style="left:630.20px;top:445.63px;font-size:20.4px;font-weight:400;color:#2b3140;font-family:'Liberation Sans', sans-serif;letter-spacing:-0.650px;">TR: TCP_SUBPART</div>
<div class="t " style="left:850.40px;top:445.63px;font-size:20.4px;font-weight:400;color:#2b3140;font-family:'Liberation Sans', sans-serif;letter-spacing:-0.197px;">TR: !MULTICAST</div>
<div class="t " style="left:1050.00px;top:445.63px;font-size:20.4px;font-weight:400;color:#2b3140;font-family:'Liberation Sans', sans-serif;letter-spacing:-0.377px;">TR: !AIO</div>
<div class="t " style="left:1170.60px;top:445.63px;font-size:20.4px;font-weight:400;color:#2b3140;font-family:'Liberation Sans', sans-serif;letter-spacing:-0.603px;">TR: !SF_BLACKLIST</div>
<div class="t " style="left:1396.60px;top:445.63px;font-size:20.4px;font-weight:400;color:#2b3140;font-family:'Liberation Sans', sans-serif;letter-spacing:-0.756px;">TR: !BROKEN</div>
<div class="t " style="left:1563.20px;top:445.63px;font-size:20.4px;font-weight:400;color:#2b3140;font-family:'Liberation Sans', sans-serif;letter-spacing:0.026px;">TS_SET: ip4_testing11</div>
<div class="t " style="left:150.50px;top:546.64px;font-size:24.6px;font-weight:400;color:#1e2535;font-family:'Liberation Mono', monospace;letter-spacing:0.341px;-webkit-text-stroke:0.9px #1e2535;">Log</div>
<div class="t " style="left:2530.00px;top:547.47px;font-size:22.6px;font-weight:400;color:#fff;font-family:'Liberation Sans', sans-serif;letter-spacing:0.669px;-webkit-text-stroke:0.65px #fff;">Experimental</div>
<div class="t " style="left:2760.20px;top:547.47px;font-size:22.6px;font-weight:400;color:#6678e2;font-family:'Liberation Sans', sans-serif;letter-spacing:-0.641px;-webkit-text-stroke:0.65px #6678e2;">Run</div>
<div class="t " style="left:2891.60px;top:547.47px;font-size:22.6px;font-weight:400;color:#6678e2;font-family:'Liberation Sans', sans-serif;letter-spacing:0.800px;-webkit-text-stroke:0.65px #6678e2;">History</div>
<div class="t " style="left:3059.90px;top:547.47px;font-size:22.6px;font-weight:400;color:#dfe2ea;font-family:'Liberation Sans', sans-serif;letter-spacing:0.460px;-webkit-text-stroke:0.65px #dfe2ea;">Measure</div>
<div class="t " style="left:3241.90px;top:547.47px;font-size:22.6px;font-weight:400;color:#6678e2;font-family:'Liberation Sans', sans-serif;letter-spacing:0.556px;-webkit-text-stroke:0.65px #6678e2;">Source</div>
<div class="t " style="left:736.60px;top:910.88px;font-size:50px;font-weight:700;color:#fff;font-family:'Liberation Sans', sans-serif;letter-spacing:-1.737px;">Click here to expand toolbar</div>
</body></html>
